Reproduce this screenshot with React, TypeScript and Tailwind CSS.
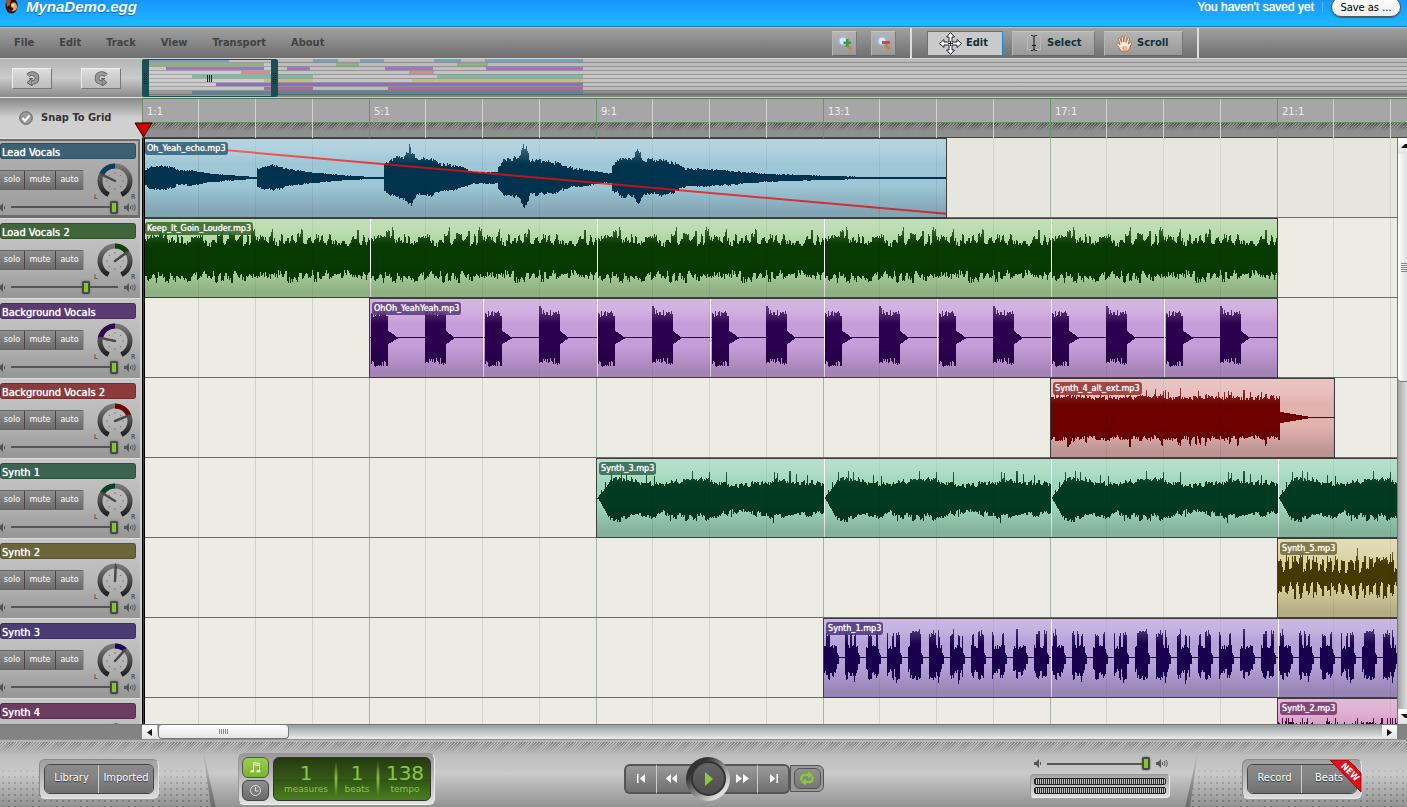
import React from 'react';

type Point = [number, number];
type WaveKind = 'vocal' | 'dense' | 'burst' | 'lead' | 'swell' | 'spiky' | 'pulse' | 'low';

interface Track {
  name: string;
  bar: string;
  arc: string;
  pan: number;
  volume: number;
  clip: {
    file: string;
    start: number;
    length: number;
    loop: number;
    wave: WaveKind;
    ink: string;
    fill: string;
    label: string;
    fade?: boolean;
  };
}

// four measures take this many pixels on the timeline
const SECTION = 227;
const measureToPx = (measure: number) => Math.round((measure * SECTION) / 4);

const tracks: Track[] = [
  {
    name: 'Lead Vocals', bar: 'bg-[#3c6272]', arc: '#0b3f5c', pan: -64, volume: 100,
    clip: { file: 'Oh_Yeah_echo.mp3', start: 0, length: 14.16, loop: 0, wave: 'vocal', ink: '#00344e', fill: 'bg-[#9dc6d6]', label: 'bg-[#2b5f74]/85', fade: true }
  },
  {
    name: 'Load Vocals 2', bar: 'bg-[#41653b]', arc: '#0c4405', pan: 54, volume: 72,
    clip: { file: 'Keep_It_Goin_Louder.mp3', start: 0, length: 20, loop: 4, wave: 'dense', ink: '#063a00', fill: 'bg-[#abd49d]', label: 'bg-[#336428]/85' }
  },
  {
    name: 'Background Vocals', bar: 'bg-[#5a3b71]', arc: '#31054f', pan: -78, volume: 100,
    clip: { file: 'OhOh_YeahYeah.mp3', start: 4, length: 16, loop: 2, wave: 'burst', ink: '#2b004e', fill: 'bg-[#c59ed9]', label: 'bg-[#5a3779]/85' }
  },
  {
    name: 'Background Vocals 2', bar: 'bg-[#8b3b3c]', arc: '#6c0503', pan: 68, volume: 100,
    clip: { file: 'Synth_4_alt_ext.mp3', start: 16, length: 5, loop: 0, wave: 'lead', ink: '#6e0000', fill: 'bg-[#e2b2b0]', label: 'bg-[#93302f]/85' }
  },
  {
    name: 'Synth 1', bar: 'bg-[#3a6450]', arc: '#04452a', pan: -58, volume: 100,
    clip: { file: 'Synth_3.mp3', start: 8, length: 16, loop: 4, wave: 'swell', ink: '#003a20', fill: 'bg-[#9ed5b9]', label: 'bg-[#2e654a]/85' }
  },
  {
    name: 'Synth 2', bar: 'bg-[#6b653b]', arc: '#4a4406', pan: 3, volume: 100,
    clip: { file: 'Synth_5.mp3', start: 20, length: 16, loop: 4, wave: 'spiky', ink: '#443a00', fill: 'bg-[#d7cf9f]', label: 'bg-[#736832]/85' }
  },
  {
    name: 'Synth 3', bar: 'bg-[#4a3b72]', arc: '#1b0759', pan: 42, volume: 100,
    clip: { file: 'Synth_1.mp3', start: 12, length: 16, loop: 4, wave: 'pulse', ink: '#18004e', fill: 'bg-[#b5a0d8]', label: 'bg-[#49347d]/85' }
  },
  {
    name: 'Synth 4', bar: 'bg-[#6b3b60]', arc: '#4d0741', pan: 20, volume: 100,
    clip: { file: 'Synth_2.mp3', start: 20, length: 16, loop: 4, wave: 'low', ink: '#44003a', fill: 'bg-[#d8a0c9]', label: 'bg-[#73326a]/85' }
  }
];

const noise = (n: number) => {
  const s = Math.sin(n * 127.1 + 11.7) * 43758.5453;
  return s - Math.floor(s);
};

const vocalEnvelope: Point[] = [
  [0, 6], [6, 11], [14, 12], [31, 11], [33, 8], [47, 8], [65, 5], [82, 3], [113, 1], [114, 9], [121, 12], [133, 13],
  [145, 9], [165, 6], [198, 3], [228, 1], [240, 1], [241, 14], [248, 19], [262, 23], [266, 32], [270, 24], [275, 18],
  [288, 20], [298, 14], [315, 12], [331, 6], [354, 6], [355, 12], [361, 18], [375, 21], [380, 30], [384, 29],
  [387, 17], [398, 18], [415, 15], [428, 10], [445, 8], [464, 5], [468, 5], [469, 14], [478, 19], [490, 20], [494, 30],
  [500, 17], [517, 19], [535, 14], [542, 9], [558, 9], [575, 8], [592, 7], [612, 5], [625, 4], [658, 3], [690, 2],
  [725, 1], [804, 1]
];

const lerp = (points: Point[], x: number) => {
  for (let i = 1; i < points.length; i++) {
    const [x0, y0] = points[i - 1];
    const [x1, y1] = points[i];
    if (x <= x1) return y0 + ((y1 - y0) * (x - x0)) / (x1 - x0);
  }
  return points[points.length - 1][1];
};

// height of the wave above and below the centre line at column x
const amplitude = (kind: WaveKind, x: number): Point => {
  const a = noise(x);
  const b = noise(x + 500);
  const pair = noise(Math.floor(x / 2) + 40);
  const wide = noise(Math.floor(x / 4) + 90);
  switch (kind) {
    case 'vocal': {
      const v = lerp(vocalEnvelope, x);
      return [v * (0.82 + a * 0.16 + pair * 0.16), v * (0.76 + b * 0.14 + wide * 0.16)];
    }
    case 'dense':
      return [11 + wide * 9 + a * 5 + (pair > 0.75 ? 7 : 0), 11 + noise(Math.floor(x / 3)) * 9 + b * 6];
    case 'burst': {
      if (x < 1) return [1, 0];
      if (x < 18) return [20 + a * 7, 23 + b * 6];
      if (x < 28) return [((28 - x) * 7) / 10, ((28 - x) * 6) / 10];
      if (x < 55) return [1, 0];
      if (x < 76) return [x < 57 ? 32 : 22 + a * 8, 20 + b * 7];
      if (x < 84) return [((84 - x) * 7) / 8, ((84 - x) * 6) / 8];
      return [1, 0];
    }
    case 'lead': {
      if (x < 229) return [17 + a * 4 + pair * 4 + (a > 0.9 ? 5 : 0), 17 + b * 4 + wide * 3 + (pair > 0.85 ? 6 : 0)];
      return [Math.max(1, 6 - (x - 229) / 6), Math.max(0, 5 - (x - 229) / 6)];
    }
    case 'swell': {
      const drift = Math.sin(x / 13) * 2 + Math.sin(x / 31);
      const ramp = Math.min(1, x / 13);
      return [
        (12 + drift + pair * 5 + a * 3 + (a > 0.93 ? 8 : 0)) * ramp,
        (13 + drift + wide * 6 + b * 3 + (b > 0.95 ? 6 : 0)) * ramp
      ];
    }
    case 'spiky': {
      const bar = x % 7 < 4;
      return bar ? [12 + pair * 10 + a * 3 + (a > 0.88 ? 6 : 0), 9 + pair * 10 + b * 4] : [5 + a * 6 + (pair > 0.7 ? 8 : 0), 4 + b * 5];
    }
    case 'pulse': {
      const t = x % 21;
      if (t > 14) return [1, 0];
      if (t > 12) return [7 - (t - 12) * 2, 6];
      const tall = pair > 0.45;
      return [tall ? 21 + a * 8 : 9 + a * 4, (tall ? 17 : 11) + b * 5 + (t > 7 && t < 10 ? 4 : 0)];
    }
    case 'low':
      return [a > 0.88 ? 20 : 10 + a * 8, 12 + b * 8];
  }
};

const wavePath = (kind: WaveKind, width: number, loop: number) => {
  let d = '';
  for (let x = 0; x < width; x++) {
    const local = loop ? x % loop : x;
    const [up, down] = amplitude(kind, Math.floor(local)).map(Math.round);
    d += `M${x} ${40 - up}h1v${up + down || 1}h-1z`;
  }
  return d;
};

const SpeakerLow = () => (
  <svg className="shrink-0" width="7" height="9" viewBox="0 0 7 9" fill="#555" aria-hidden="true">
    <path d="M0 3h2l3-3v9L2 6H0z" />
    <path d="M6 3h1v3H6z" />
  </svg>
);

const SpeakerHigh = () => (
  <svg className="shrink-0" width="12" height="9" viewBox="0 0 12 9" fill="none" aria-hidden="true">
    <path d="M0 3h2l3-3v9L2 6H0z" fill="#555" />
    <path d="M6.500 3v3M8 2c1 1.500 1 3.500 0 5M10 1c1.500 2 1.500 5 0 7" stroke="#555" />
  </svg>
);

const VolumeSlider: React.FC<{ label: string; value: number }> = ({ label, value }) => (
  <div className="flex h-3 items-center gap-1.5">
    <SpeakerLow />
    <input
      type="range"
      aria-label={label}
      defaultValue={value}
      className="h-3 min-w-0 flex-1 appearance-none bg-[linear-gradient(#555,#555)] bg-[length:100%_2px] bg-center bg-no-repeat [&::-webkit-slider-thumb]:h-[13px] [&::-webkit-slider-thumb]:w-2 [&::-webkit-slider-thumb]:appearance-none [&::-webkit-slider-thumb]:rounded-xs [&::-webkit-slider-thumb]:border-2 [&::-webkit-slider-thumb]:border-[#454b40] [&::-webkit-slider-thumb]:bg-[#84c62f] [&::-webkit-slider-thumb]:shadow-[0_0_2px_#555]"
    />
    <SpeakerHigh />
  </div>
);

const Knob: React.FC<{ id: number; pan: number; color: string }> = ({ id, pan, color }) => {
  const at = (deg: number, r: number) => {
    const rad = ((deg - 90) * Math.PI) / 180;
    return `${22 + r * Math.cos(rad)} ${18 + r * Math.sin(rad)}`;
  };
  return (
    <svg width="44" height="38" viewBox="0 0 44 38" role="img" aria-label="Pan">
      <defs>
        <linearGradient id={`ring${id}`} x1="0" y1="0" x2="0" y2="1">
          <stop offset="0" stopColor="#777" />
          <stop offset="1" stopColor="#222" />
        </linearGradient>
      </defs>
      <path d={`M${at(-155, 15)}A15 15 0 1 1 ${at(155, 15)}`} fill="none" stroke={`url(#ring${id})`} strokeWidth="5" />
      <path d={`M${at(0, 15)}A15 15 0 0 ${pan > 0 ? 1 : 0} ${at(pan, 15)}`} fill="none" stroke={color} strokeWidth="5" />
      {[-135, -90, -45, 0, 45, 90, 135, 180].map(deg => (
        <circle key={deg} cx={at(deg, 8).split(' ')[0]} cy={at(deg, 8).split(' ')[1]} r="0.700" fill="#6a6a6a" />
      ))}
      <path d={`M${at(0, 0)}L${at(pan, 15)}`} stroke="#4a4a4a" strokeWidth="2.500" strokeLinecap="round" />
      <text x="1" y="36" fontSize="7" fill="#333">L</text>
      <text x="38" y="36" fontSize="7" fill="#333">R</text>
    </svg>
  );
};

const TrackHeader: React.FC<{ track: Track; index: number }> = ({ track, index }) => (
  <div
    className={`h-20 shrink-0 border-t border-[#dedede] bg-linear-to-b pr-1 pt-1 ${
      index === 0
        ? 'from-[#b4b4b4] to-[#9c9c9c] shadow-[inset_-2px_2px_0_#6c6c6c,inset_0_-3px_0_#6c6c6c]'
        : 'from-[#c8c8c8] via-[#b9b9b9] to-[#969696]'
    }`}
  >
    <div className={`h-4 w-[136px] overflow-hidden whitespace-nowrap rounded-[3px] border border-black/20 px-px text-[11px] leading-[17px] text-white [text-shadow:0_0_1px_#fff] ${track.bar}`}>
      {track.name}
    </div>
    <div className="-mr-px flex h-[38px] items-start justify-between pt-1">
      <div className="mt-[7px] flex h-5 overflow-hidden rounded-r-xs border-y border-[#666] text-[9px] text-white">
        {['solo', 'mute', 'auto'].map((mode, i) => (
          <button
            key={mode}
            type="button"
            className={`border-r border-[#444] bg-linear-to-b from-[#8e8e8e] to-[#6b6b6b] pb-px ${i === 0 ? 'w-[25px]' : i === 1 ? 'w-[31px]' : 'w-7 border-r-[#999]'}`}
          >
            {mode}
          </button>
        ))}
      </div>
      <Knob id={index} pan={track.pan} color={track.arc} />
    </div>
    <div className="-ml-0.5 mt-1">
      <VolumeSlider label={`${track.name} volume`} value={track.volume} />
    </div>
  </div>
);

const Lane: React.FC<{ track: Track; index: number }> = ({ track, index }) => {
  const { clip } = track;
  const width = measureToPx(clip.length) + 1;
  const loop = (clip.loop * SECTION) / 4;
  const seams: number[] = [];
  if (loop) for (let x = loop; x < width - 2; x += loop) seams.push(Math.floor(x));

  return (
    <div
      className={`h-20 shrink-0 overflow-visible border-b border-[#6c6c6c] bg-[repeating-linear-gradient(90deg,#a3b5a0_0_1px,transparent_1px_56px,#d3d3ca_56px_57px,transparent_57px_113px,#d3d3ca_113px_114px,transparent_114px_170px,#d3d3ca_170px_171px,transparent_171px_227px)] ${
        index === 0 ? 'bg-[#e6e6df]' : 'bg-[#edece4]'
      }`}
    >
      <div
        className={`relative h-20 overflow-hidden border border-[#3d3d3d] ${clip.fill}`}
        style={{ marginLeft: measureToPx(clip.start), width }}
      >
        <svg className="block" width={width} height="78" viewBox={`0 1 ${width} 78`} shapeRendering="crispEdges" aria-hidden="true">
          <path d={wavePath(clip.wave, width, loop)} fill={clip.ink} />
          {seams.map(x => <rect key={x} x={x} y="0" width="1" height="80" fill="#fff" />)}
          {clip.fade && <path d={`M2 5L${width} 76`} stroke="#ff0a0a" strokeOpacity="0.750" strokeWidth="2" shapeRendering="auto" />}
        </svg>
        <div className="absolute inset-0 bg-[repeating-linear-gradient(90deg,transparent_0_55px,rgba(0,0,0,.07)_55px_56px,transparent_56px_112px,rgba(0,0,0,.07)_112px_113px,transparent_113px_169px,rgba(0,0,0,.07)_169px_170px,transparent_170px_227px)]" />
        <div className="absolute inset-0 bg-[linear-gradient(rgba(255,255,255,.25),rgba(255,255,255,.2)_15%,transparent_32%,transparent_60%,rgba(0,0,0,.17)_94%)]" />
        <span className={`absolute left-0.5 top-[3px] rounded-[3px] px-0.5 text-[9px] leading-[13px] text-white [text-shadow:0_0_1px_#fff] ${clip.label}`}>
          {clip.file}
        </span>
      </div>
    </div>
  );
};

const overviewRows: { color: string; spans: Point[] }[] = [
  { color: '#6ba5c3', spans: [[7, 87], [171, 196], [218, 242], [292, 319], [343, 441]] },
  { color: '#85b873', spans: [[7, 122], [194, 217], [315, 346]] },
  { color: '#a56fcb', spans: [[24, 122], [145, 168], [243, 291], [344, 441]] },
  { color: '#d98b8a', spans: [[99, 128], [267, 292]] },
  { color: '#6fc39c', spans: [[50, 171], [295, 441]] },
  { color: '#c8bb72', spans: [[122, 171], [270, 294], [295, 441]] },
  { color: '#8c6cc9', spans: [[74, 441]] },
  { color: '#b9629f', spans: [[122, 171], [246, 441]] },
  { color: '#5089a3', spans: [[50, 441]] }
];

const Overview = () => (
  <div className="h-full flex-1 overflow-hidden border-b border-b-[#d0d0d0] bg-[repeating-linear-gradient(transparent_0_3px,rgba(0,0,0,.24)_3px_4px),linear-gradient(#b7b7b7,#c8c8c8_50%,#bbb_80%,#858585_88%)]">
    <svg className="block" width="460" height="39" viewBox="0 0 460 39" shapeRendering="crispEdges" role="img" aria-label="Song overview">
      <rect width="136" height="38" fill="#fff" opacity="0.150" />
      {overviewRows.map((row, r) =>
        row.spans.map(([from, to]) => (
          <rect key={`${r}-${from}`} x={from} y={r * 4} width={to - from} height="3" fill={row.color} />
        ))
      )}
      <path d="M2 0h132v1H2zM2 37h132v1H2z" fill="#1b4e55" />
      <g shapeRendering="auto">
        <path d="M7 0v38H2q-2 0-2-2V2q0-2 2-2zM129 0v38h5q2 0 2-2V2q0-2-2-2z" fill="#1b4e55" />
      </g>
      <path d="M2.500 14v11M4.500 14v11M131.500 14v11M133.500 14v11" stroke="#081f22" strokeDasharray="1 1" />
      <path d="M65.500 16v7M67.500 16v7M69.500 16v7" stroke="#222" />
    </svg>
  </div>
);

const Ruler = () => (
  <div className="relative h-full min-w-0 flex-1 border-t border-[#577a57] bg-[linear-gradient(#a6a6a6_0_23px,#6f8a6f_23px_24px,transparent_24px)]">
    <div className="absolute inset-x-0 bottom-0 h-[15px] border-b border-[#444] bg-[linear-gradient(transparent,#8f8f8f_60%),repeating-linear-gradient(135deg,#929292_0_1px,#505050_1px_2px)]" />
    <div className="absolute inset-0 flex overflow-hidden bg-[repeating-linear-gradient(90deg,#6f906d_0_1px,transparent_1px_56px,#d0d0d0_56px_57px,transparent_57px_113px,#d0d0d0_113px_114px,transparent_114px_170px,#d0d0d0_170px_171px,transparent_171px_227px)] text-[11px] leading-[26px] text-[#eee]">
      {['1:1', '5:1', '9:1', '13:1', '17:1', '21:1'].map(mark => (
        <span key={mark} className="w-[227px] shrink-0 pl-[5px]">{mark}</span>
      ))}
    </div>
    <svg className="absolute -left-2 bottom-0 z-10" width="19" height="16" viewBox="0 0 19 16" aria-hidden="true">
      <path d="M1 1h17L9.500 15z" fill="#d00000" stroke="#1a0000" />
    </svg>
  </div>
);

const ZoomGlyph: React.FC<{ minus?: boolean }> = ({ minus }) => (
  <svg width="14" height="14" viewBox="0 0 14 14" aria-hidden="true">
    <path d="M8 8.500l4 4" stroke="#b98a45" strokeWidth="3" strokeLinecap="round" />
    <circle cx="5" cy="5" r="4" fill="#d7e8fb" stroke="#9dbfe4" strokeWidth="1.500" />
    {minus ? (
      <path d="M5 5h8v3H5z" fill="#ee3b35" />
    ) : (
      <path d="M8 3h2.500v2.500H13V8h-2.500v2.500H8V8H5.500V5.500H8z" fill="#3f9a3a" />
    )}
  </svg>
);

const MoveGlyph = () => (
  <svg width="23" height="23" viewBox="0 0 23 23" fill="#fff" stroke="#223" strokeLinejoin="round" aria-hidden="true">
    <path d="M11.500 .5L15.500 5H13v5h5V7.500l4.500 4-4.500 4V13h-5v5h2.500l-4 4.500-4-4.500H10v-5H5v2.500l-4.500-4 4.500-4V10h5V5H7.500z" />
    <path d="M11.500 9v5M9 11.500h5" />
  </svg>
);

const CursorGlyph = () => (
  <svg width="14" height="16" viewBox="0 0 14 16" fill="none" aria-hidden="true">
    <rect x="0.500" y="1.500" width="13" height="13" stroke="#b8b8b8" />
    <path d="M4 .5c2 0 3 .5 3 1.500 0-1 1-1.500 3-1.500M4 15.500c2 0 3-.5 3-1.500 0 1 1 1.500 3 1.500M7 2v12M5 10.500h4" stroke="#111" />
  </svg>
);

const HandGlyph = () => (
  <svg width="17" height="17" viewBox="0 0 17 17" aria-hidden="true">
    <path
      d="M5 16C4 13.500 1.500 11 .8 9.200c-.4-1.200 1-1.700 1.900-.7L4 10 2.600 4.300c-.3-1.300 1.300-1.700 1.700-.4L5.500 7.500 5.300 2c0-1.400 1.800-1.400 1.900 0l.6 5 .7-5.500c.2-1.400 1.900-1.200 1.800.2L10 7.500l1.800-4.300c.6-1.200 2.100-.6 1.700.6L12.300 9l1.700-1.500c1-.8 2.300.2 1.600 1.300C14 11 13.500 14 12 16z"
      fill="#fff0df" stroke="#b5663c" strokeWidth="0.900"
    />
    <path d="M5.500 12c2-1.500 4-1.500 6 0v3.500h-5z" fill="#eeb488" />
  </svg>
);

const TurnArrow: React.FC<{ flip?: boolean }> = ({ flip }) => (
  <svg width="15" height="15" viewBox="0 0 15 15" aria-hidden="true">
    <g transform={flip ? 'matrix(-1 0 0 1 15 0)' : undefined} fill="none">
      <path d="M3 4.500C6 1 12 2.500 12 7c0 3-2 4.500-5 4.500" stroke="#5c5c5c" strokeWidth="4.500" />
      <path d="M7 7v8L2 11.500z" fill="#999" stroke="#5c5c5c" />
      <path d="M3 4.500C6 1 12 2.500 12 7c0 3-2 4.500-5 4.500" stroke="#999" strokeWidth="3" />
      <path d="M4 7.500h3.500" stroke="#5c5c5c" />
    </g>
  </svg>
);

const menuItems = ['File', 'Edit', 'Track', 'View', 'Transport', 'About'];

const toolButton = 'flex h-[25px] items-center border text-[11px] font-bold text-[#12303a]';
const idleTool = 'border-t-[#c4c4c4] border-l-[#b5b5b5] border-r-[#777] border-b-[#666] bg-linear-to-b from-[#b5b5b5] to-[#989898]';
const tray = 'rounded-md border border-[#8a8a8a] border-b-[#e6e6e6] border-r-[#e6e6e6] bg-linear-to-b from-[#9f9f9f] to-[#dcdcdc] p-1';
const panelButton = 'h-7 bg-linear-to-b from-[#8a8a8a] via-[#828282] to-[#6f6f6f] text-[11px] text-white [text-shadow:0_1px_1px_#333]';
const transportButton = 'flex h-[30px] items-center justify-center border-y-2 border-y-[#555] bg-linear-to-b from-[#999] via-[#858585] to-[#6f6f6f]';
const scrollButton = 'flex items-center justify-center bg-linear-to-b from-white to-[#e2e2e2]';
const dots = 'absolute inset-0 bg-[radial-gradient(circle,#777_1px,transparent_1px)] bg-[length:6px_6px] [mask-image:linear-gradient(transparent_25%,black)]';

const Readout: React.FC<{ value: string; unit: string; className: string }> = ({ value, unit, className }) => (
  <div className={`flex flex-col items-center justify-center ${className}`}>
    <span className="text-[20px] leading-5">{value}</span>
    <span className="text-[9px] leading-3">{unit}</span>
  </div>
);

const Divider = () => <span className="my-1 w-1 shrink-0 bg-[radial-gradient(ellipse,#9ad04e,transparent_75%)]" />;

const App: React.FC = () => {
  return (
    <div className="flex h-screen flex-col overflow-hidden bg-[#838383] font-['DejaVu_Sans_Condensed','DejaVu_Sans',sans-serif]">
      <header className="flex h-[27px] shrink-0 items-start justify-between border-b border-[#1a7fae] bg-linear-to-b from-[#1797fb] to-[#1fb8ff] font-['Liberation_Sans',Arial,sans-serif] text-white">
        <div className="flex items-start">
          <svg className="ml-[5px]" width="13" height="14" viewBox="0 0 13 14" aria-hidden="true">
            <ellipse cx="6.500" cy="5.500" rx="6" ry="8" fill="#2a120a" />
            <path d="M1 1c2-2 4-2 5-1L5 5 2 7z" fill="#a9532b" />
            <path d="M6 4c3-3 6-1 6 3 0 3-3 5-6 4 2-1 3-2 2-3L6 7z" fill="#e4a869" />
            <circle cx="8" cy="5" r="1" fill="#fff3c4" />
            <path d="M3 9l3 1-1 2z" fill="#8e1414" />
          </svg>
          <h1 className="ml-2 text-[15px] font-bold italic leading-[14px] [text-shadow:0_1px_1px_#0b62ac]">MynaDemo.egg</h1>
        </div>
        <div className="flex items-start text-[12px] leading-[14px]">
          <span className="[text-shadow:0_0_1px_#fff]">You haven't saved yet</span>
          <span className="mx-2 mt-0.5 h-2.5 w-px bg-[#5fb9f5]" />
          <button type="button" className="-mt-[3px] mr-1.5 h-5 w-[70px] rounded-full border border-[#555] bg-linear-to-b from-white to-[#ececec] pt-0.5 font-['DejaVu_Sans_Condensed','DejaVu_Sans',sans-serif] text-[11px] leading-4 text-black shadow-[0_1px_1px_#1668a0]">
            Save as ...
          </button>
        </div>
      </header>

      <nav className="flex h-[31px] shrink-0 items-center border-t border-[#bbb] bg-linear-to-b from-[#a0a0a0] to-[#6f6f6f]">
        <div className="flex gap-[25px] pl-3.5 text-[11px] font-bold text-[#424242]">
          {menuItems.map(item => (
            <button key={item} type="button">{item}</button>
          ))}
        </div>
        <div className="ml-auto flex h-full items-center pr-[210px]">
          <button type="button" aria-label="Zoom in" className={`w-[25px] justify-center ${toolButton} ${idleTool}`}><ZoomGlyph /></button>
          <button type="button" aria-label="Zoom out" className={`ml-3.5 w-[25px] justify-center ${toolButton} ${idleTool}`}><ZoomGlyph minus /></button>
          <span className="ml-3.5 mr-[15px] h-full w-0.5 bg-[#ddd]" />
          <button type="button" className={`w-[76px] gap-1 border-[#1787dd]! bg-[#cacaca] pl-[11px] ${toolButton}`}><MoveGlyph />Edit</button>
          <button type="button" className={`ml-[9px] w-[83px] gap-1.5 pl-3.5 ${toolButton} ${idleTool}`}><CursorGlyph />Select</button>
          <button type="button" className={`ml-[9px] w-[79px] gap-1 pl-[11px] ${toolButton} ${idleTool}`}><HandGlyph />Scroll</button>
          <span className="-mr-0.5 ml-3.5 h-full w-0.5 bg-[#ddd]" />
        </div>
      </nav>

      <div className="flex h-10 shrink-0 border-t border-[#d5d5d5]">
        <div className="flex w-[142px] items-center gap-[29px] border-b border-[#e5e5e5] bg-linear-to-b from-[#b5b5b5] via-[#cbcbcb] to-[#8a8a8a] pl-3">
          <button type="button" aria-label="Undo" className="flex h-[21px] w-10 items-center justify-center border border-[#eee] border-b-[#777] border-r-[#777] bg-linear-to-b from-[#dedede] to-[#bcbcbc]"><TurnArrow /></button>
          <button type="button" aria-label="Redo" className="flex h-[21px] w-10 items-center justify-center border border-[#eee] border-b-[#777] border-r-[#777] bg-linear-to-b from-[#dedede] to-[#bcbcbc]"><TurnArrow flip /></button>
        </div>
        <Overview />
      </div>

      <div className="flex h-10 shrink-0 bg-[#8f8f8f]">
        <label className="flex w-[142px] items-center gap-2 bg-linear-to-b from-[#898989] to-[#d0d0d0] to-50% pl-[19px] text-[11px] font-bold text-[#333]">
          <input type="checkbox" defaultChecked className="sr-only" />
          <svg width="14" height="14" viewBox="0 0 14 14" fill="none" aria-hidden="true">
            <circle cx="7" cy="7" r="6.300" fill="#999" stroke="#666" />
            <path d="M3.500 7l2.500 3 4.500-5.500" stroke="#fff" strokeWidth="2" />
          </svg>
          Snap To Grid
        </label>
        <Ruler />
      </div>

      <main className="flex min-h-0 flex-1">
        <aside className="flex w-[142px] shrink-0 flex-col overflow-hidden border-r-2 border-[#cfcfcf]">
          {tracks.map((track, i) => <TrackHeader key={track.name} track={track} index={i} />)}
        </aside>
        <section className="relative flex min-w-0 flex-1 flex-col overflow-hidden">
          {tracks.map((track, i) => <Lane key={track.name} track={track} index={i} />)}
          <div className="absolute inset-y-0 left-0 w-[3px] border-x border-black bg-[#d00000]" />
        </section>
        <div className="flex w-2.5 shrink-0 flex-col border-l border-[#777] bg-linear-to-r from-[#a5a5a5] to-[#dedede]">
          <button type="button" aria-label="Scroll up" className={`h-4 justify-end ${scrollButton}`}>
            <svg width="6" height="5" viewBox="0 0 6 5" aria-hidden="true"><path d="M0 4h6V0L4 0z" fill="#111" /></svg>
          </button>
          <div className="flex h-[228px] items-center justify-end rounded-bl-sm border-b border-[#777] bg-linear-to-r from-white to-[#e0e0e0]">
            <span className="h-[9px] w-1.5 bg-[repeating-linear-gradient(#888_0_1px,transparent_1px_2px)]" />
          </div>
          <button type="button" aria-label="Scroll down" className={`mt-auto h-[15px] justify-end ${scrollButton}`}>
            <svg width="6" height="5" viewBox="0 0 6 5" aria-hidden="true"><path d="M0 0h6v4H4z" fill="#111" /></svg>
          </button>
        </div>
      </main>

      <div className="flex h-[15px] shrink-0 border-t border-[#777] pl-[142px] pr-2.5">
        <button type="button" aria-label="Scroll left" className={`w-[15px] ${scrollButton}`}>
          <svg width="5" height="7" viewBox="0 0 5 7" aria-hidden="true"><path d="M5 0v7L0 3.500z" fill="#111" /></svg>
        </button>
        <div className="flex-1 bg-linear-to-b from-[#979d9e] to-[#ececec] pl-px">
          <div className="flex h-3.5 w-[131px] items-center justify-center rounded-sm border border-t-0 border-[#777] bg-linear-to-b from-white to-[#e4e4e4]">
            <span className="h-[5px] w-[9px] bg-[repeating-linear-gradient(90deg,#888_0_1px,transparent_1px_2px)]" />
          </div>
        </div>
        <button type="button" aria-label="Scroll right" className={`w-[15px] ${scrollButton}`}>
          <svg width="5" height="7" viewBox="0 0 5 7" aria-hidden="true"><path d="M0 0v7l5-3.500z" fill="#111" /></svg>
        </button>
      </div>

      <footer className="relative flex h-[68px] shrink-0 items-center border-t border-[#8c8c8c] bg-linear-to-b from-[#b4b4b4] via-[#cacaca] to-[#939393] pt-2.5">
        <div className="absolute inset-x-0 top-0.5 h-3 bg-[linear-gradient(rgba(184,184,184,.2),#b9b9b9),repeating-linear-gradient(135deg,#b8b8b8_0_1px,#777_1px_2px)]" />
        <div className="relative flex h-[58px] w-[211px] items-center pl-[39px] [clip-path:polygon(0_0,203px_0,211px_100%,0_100%)]">
          <div className={dots} />
          <div className={`relative ${tray}`}>
            <div className="flex overflow-hidden rounded-md border border-[#444]">
              <button type="button" className={`w-[54px] border-r border-[#ccc] ${panelButton}`}>Library</button>
              <button type="button" className={`w-[54px] ${panelButton}`}>Imported</button>
            </div>
          </div>
        </div>
        <svg className="relative -ml-2.5 h-[58px] w-4" viewBox="0 0 16 58" preserveAspectRatio="none" aria-hidden="true">
          <defs>
            <linearGradient id="slope" x1="0" y1="0" x2="0" y2="1">
              <stop offset="0" stopColor="#777" stopOpacity="0.100" />
              <stop offset="1" stopColor="#666" stopOpacity="0.900" />
            </linearGradient>
          </defs>
          <path d="M2 0l8 58h5z" fill="url(#slope)" />
        </svg>

        <div className="relative ml-[21px] flex h-[52px] gap-1 rounded-md border border-[#999] border-b-[#eee] border-r-[#eee] bg-linear-to-b from-[#999] to-[#e2e2e2] p-[3px]">
          <div className="flex flex-col justify-between">
            <button type="button" aria-label="Measures" className="flex h-[21px] w-[27px] items-center justify-center rounded-md border border-[#555] bg-linear-to-b from-[#9bd04f] to-[#79b52c]">
              <svg width="11" height="12" viewBox="0 0 11 12" fill="none" aria-hidden="true">
                <path d="M3.500 10V1.500l6 1V10M3.500 3.500l6 1" stroke="#fff" />
                <ellipse cx="2.300" cy="10.200" rx="1.800" ry="1.300" fill="#fff" />
                <ellipse cx="8.300" cy="10.200" rx="1.800" ry="1.300" fill="#fff" />
              </svg>
            </button>
            <button type="button" aria-label="Clock time" className="flex h-[21px] w-[27px] items-center justify-center rounded-md border border-[#444] bg-linear-to-b from-[#8f8f8f] to-[#6a6a6a]">
              <svg width="13" height="13" viewBox="0 0 13 13" fill="none" stroke="#ddd" aria-hidden="true">
                <circle cx="6.500" cy="6.500" r="5" />
                <path d="M6.500 3v4h3" />
              </svg>
            </button>
          </div>
          <div className="flex h-11 w-[158px] rounded-md border border-[#333] bg-[linear-gradient(#243b10,#36591a_50%,#2f5212_50%,#4b7f20)] font-['DejaVu_Sans',sans-serif] text-[#8bc53f]">
            <Readout value="1" unit="measures" className="w-[60px] pl-1" />
            <Divider />
            <Readout value="1" unit="beats" className="w-[38px]" />
            <Divider />
            <Readout value="138" unit="tempo" className="flex-1" />
          </div>
        </div>

        <div className="relative flex flex-1 items-center justify-center pr-[17px]">
          <button type="button" aria-label="To start" className={`w-[33px] rounded-l-md border-l-2 border-r border-l-[#555] border-r-[#ccc] ${transportButton}`}>
            <svg width="9" height="9" viewBox="0 0 9 9" fill="#fff" aria-hidden="true"><path d="M0 0h1.500v9H0zM8 0v9L3 4.500z" /></svg>
          </button>
          <button type="button" aria-label="Rewind" className={`w-9 pr-2 ${transportButton}`}>
            <svg width="11" height="9" viewBox="0 0 11 9" fill="#fff" aria-hidden="true"><path d="M5 0v9L0 4.500zM11 0v9L6 4.500z" /></svg>
          </button>
          <button type="button" aria-label="Play" className="z-10 -mx-[7px] flex size-11 items-center justify-center rounded-full bg-[linear-gradient(135deg,#333_25%,#ddd_80%)]">
            <span className="flex size-[35px] items-center justify-center rounded-full border-2 border-[#333] bg-linear-to-b from-[#666] to-[#4d4d4d] pl-0.5">
              <svg width="8" height="14" viewBox="0 0 8 14" aria-hidden="true"><path d="M0 0v14l8-7z" fill="#8cc83c" /></svg>
            </span>
          </button>
          <button type="button" aria-label="Fast forward" className={`w-[35px] border-r border-r-[#ccc] pl-1 ${transportButton}`}>
            <svg width="13" height="9" viewBox="0 0 13 9" fill="#fff" aria-hidden="true"><path d="M0 0v9l6-4.500zM7 0v9l6-4.500z" /></svg>
          </button>
          <button type="button" aria-label="To end" className={`w-8 rounded-r-md border-r-2 border-r-[#555] ${transportButton}`}>
            <svg width="9" height="9" viewBox="0 0 9 9" fill="#fff" aria-hidden="true"><path d="M7.500 0H9v9H7.500zM1 0v9l5-4.500z" /></svg>
          </button>
          <button type="button" aria-label="Loop" className="flex h-[27px] w-[34px] items-center justify-center rounded-r-md border border-[#555] bg-[#999]">
            <span className="flex h-[21px] w-[27px] items-center justify-center rounded-md border border-[#555] bg-linear-to-b from-[#909090] to-[#777]">
              <svg width="16" height="15" viewBox="0 0 16 15" fill="none" aria-hidden="true">
                <path d="M3 9.500c-2-3 0-5.500 3-5.500h4M13 5.500c2 3 0 5.500-3 5.500H6" stroke="#8cc83c" strokeWidth="2.500" />
                <path d="M9 .5v7L14 4zM7 7.500v7L2 11z" fill="#8cc83c" />
              </svg>
            </span>
          </button>
        </div>

        <div className="relative flex w-[140px] flex-col gap-1 pb-0.5">
          <div className="pl-1 pr-0.5"><VolumeSlider label="Master volume" value={100} /></div>
          <div className="flex h-6 flex-col justify-between rounded-sm border border-[#999] border-b-[#eee] border-r-[#eee] bg-linear-to-b from-[#a5a5a5] to-[#e0e0e0] p-[3px]">
            <span className="h-[7px] rounded-xs border border-[#222] bg-[repeating-linear-gradient(90deg,#2a2a2a_0_1px,#c6c6c6_1px_2px)]" />
            <span className="h-[7px] rounded-xs border border-[#222] bg-[repeating-linear-gradient(90deg,#2a2a2a_0_1px,#c6c6c6_1px_2px)]" />
          </div>
        </div>

        <svg className="relative ml-3.5 h-[58px] w-4" viewBox="0 0 16 58" preserveAspectRatio="none" aria-hidden="true">
          <path d="M14 0L6 58H1z" fill="url(#slope)" />
        </svg>
        <div className="relative -ml-2.5 flex h-[58px] w-[217px] items-center pl-[52px] [clip-path:polygon(8px_0,100%_0,100%_100%,0_100%)]">
          <div className={dots} />
          <div className={`relative ${tray}`}>
            <div className="flex overflow-hidden rounded-md border border-[#444]">
              <button type="button" className={`w-[54px] border-r border-[#ccc] ${panelButton}`}>Record</button>
              <button type="button" className={`w-[54px] ${panelButton}`}>Beats</button>
            </div>
            <svg className="absolute -right-px top-0" width="32" height="33" viewBox="0 0 32 33" aria-hidden="true">
              <path d="M0 0h18l13 13v19z" fill="#df1019" stroke="#a00008" />
              <text transform="translate(18 14) rotate(45)" textAnchor="middle" fontSize="9" fontWeight="bold" fill="#fff">NEW</text>
            </svg>
          </div>
        </div>
      </footer>
    </div>
  );
};

export default App;
